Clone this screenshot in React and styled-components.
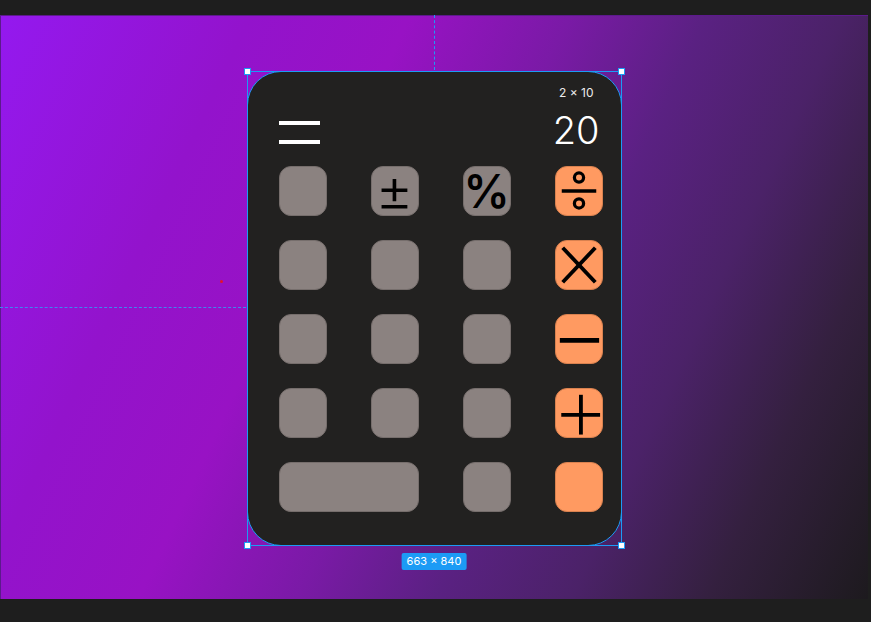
import React from 'react'
import styled, { createGlobalStyle } from 'styled-components'

const GlobalStyle = createGlobalStyle`
  html, body {
    margin: 0;
    padding: 0;
    background: #1e1e1e;
  }
  * {
    box-sizing: border-box;
  }
`;

const accent = '#1c9bf5';

const Screen = styled.div`
  width: 871px;
  height: 622px;
  padding-top: 15px;
  background: #1e1e1e;
  font-family: Inter, "Noto Sans", sans-serif;
  overflow: hidden;
`;

const Workspace = styled.div`
  display: flex;
  height: 584px;
`;

const Canvas = styled.div`
  position: relative;
  width: 868px;
  height: 584px;
  display: flex;
  justify-content: center;
  align-items: flex-start;
  padding-top: 56px;
  box-shadow: inset 1px 1px 0 #5c1a8c;
  background: linear-gradient(
    115deg,
    #9419ef 0%,
    #9313cc 22%,
    #9812c4 36%,
    #7a1aa6 50%,
    #5a2182 62%,
    #4b2268 74%,
    #34203f 86%,
    #1d1a1e 100%
  );
`;

const GuideV = styled.div`
  position: absolute;
  left: 434px;
  top: 0;
  height: 55px;
  border-left: 1px dashed ${accent};
`;

const GuideH = styled.div`
  position: absolute;
  left: 0;
  top: 292px;
  width: 246px;
  border-top: 1px dashed #3f86f0;
`;

const Marker = styled.div`
  position: absolute;
  left: 220px;
  top: 265px;
  width: 3px;
  height: 3px;
  border-radius: 50%;
  background: #e3122c;
`;

const Selection = styled.div`
  position: relative;
  width: 375px;
  height: 475px;

  &::after {
    content: '';
    position: absolute;
    inset: 0;
    border: 1px solid ${accent};
    pointer-events: none;
  }
`;

const Handle = styled.span`
  position: absolute;
  width: 7px;
  height: 7px;
  background: #fff;
  border: 1px solid ${accent};
  z-index: 2;
  ${({ $v }) => ($v === 'top' ? 'top: -3px;' : 'bottom: -3px;')}
  ${({ $h }) => ($h === 'left' ? 'left: -3px;' : 'right: -3px;')}
`;

const SizeBadge = styled.div`
  position: absolute;
  top: calc(100% + 7px);
  left: 50%;
  transform: translateX(-50%);
  padding: 0 5px;
  height: 17px;
  line-height: 17px;
  border-radius: 2px;
  background: ${accent};
  color: #fff;
  font-size: 11px;
  white-space: nowrap;
`;

const Card = styled.div`
  width: 100%;
  height: 100%;
  display: flex;
  flex-direction: column;
  padding: 14px 17px 0 31px;
  border: 1px solid ${accent};
  border-radius: 34px;
  background: #222120;
`;

const Expression = styled.div`
  align-self: flex-end;
  margin-right: 10px;
  font-size: 12px;
  line-height: 14px;
  color: #ececec;
`;

const DisplayRow = styled.div`
  display: flex;
  justify-content: space-between;
  align-items: flex-start;
  height: 38px;
  margin-top: 11px;
`;

const Hamburger = styled.div`
  display: flex;
  flex-direction: column;
  gap: 15px;
  margin-top: 10px;
  width: 41px;

  span {
    display: block;
    height: 4px;
    background: #fff;
  }
`;

const Result = styled.div`
  margin-right: 4px;
  font-size: 38px;
  font-weight: 300;
  line-height: 38px;
  color: #fff;
`;

const Keypad = styled.div`
  display: grid;
  grid-template-columns: repeat(4, 48px);
  grid-auto-rows: 50px;
  column-gap: 44px;
  row-gap: 24px;
  margin-top: 17px;
`;

const Key = styled.div`
  display: flex;
  align-items: center;
  justify-content: center;
  grid-column: ${({ $span }) => ($span ? `span ${$span}` : 'auto')};
  border-radius: 12px;
  border: 1px solid ${({ $op }) => ($op ? '#d9814f' : '#766e6c')};
  background: ${({ $op }) => ($op ? '#ff9a61' : '#8b8280')};
  color: #000;
`;

const Glyph = styled.span`
  font-size: ${({ $size }) => $size}px;
  font-weight: ${({ $weight }) => $weight || 400};
  line-height: 48px;
  margin-top: ${({ $lift }) => ($lift ? `-${$lift}px` : '0')};
`;

const OpIcon = ({ children }) => (
  <svg width="48" height="50" viewBox="0 0 48 50" fill="none" stroke="#000">
    {children}
  </svg>
);

const DivideIcon = () => (
  <OpIcon>
    <circle cx="24" cy="11" r="4.8" strokeWidth="3.4" />
    <line x1="6" y1="25" x2="42" y2="25" strokeWidth="3.6" />
    <circle cx="24" cy="38" r="4.8" strokeWidth="3.4" />
  </OpIcon>
);

const TimesIcon = () => (
  <OpIcon>
    <line x1="7" y1="7" x2="41" y2="43" strokeWidth="4" />
    <line x1="41" y1="7" x2="7" y2="43" strokeWidth="4" />
  </OpIcon>
);

const MinusIcon = () => (
  <OpIcon>
    <line x1="4" y1="26.5" x2="45" y2="26.5" strokeWidth="5" />
  </OpIcon>
);

const PlusIcon = () => (
  <OpIcon>
    <line x1="5.5" y1="27" x2="46" y2="27" strokeWidth="4" />
    <line x1="26" y1="6" x2="26" y2="47.5" strokeWidth="4" />
  </OpIcon>
);

const App = () => {
  return (
    <>
      <GlobalStyle />
      <Screen>
        <Workspace>
          <Canvas>
            <GuideV />
            <GuideH />
            <Marker />
            <Selection>
              <Card>
                <Expression>2 × 10</Expression>
                <DisplayRow>
                  <Hamburger>
                    <span />
                    <span />
                  </Hamburger>
                  <Result>20</Result>
                </DisplayRow>
                <Keypad>
                  <Key />
                  <Key><Glyph $size={58} $weight={300} $lift={2}>±</Glyph></Key>
                  <Key><Glyph $size={46} $weight={600}>%</Glyph></Key>
                  <Key $op><DivideIcon /></Key>

                  <Key />
                  <Key />
                  <Key />
                  <Key $op><TimesIcon /></Key>

                  <Key />
                  <Key />
                  <Key />
                  <Key $op><MinusIcon /></Key>

                  <Key />
                  <Key />
                  <Key />
                  <Key $op><PlusIcon /></Key>

                  <Key $span={2} />
                  <Key />
                  <Key $op />
                </Keypad>
              </Card>
              <Handle $v="top" $h="left" />
              <Handle $v="top" $h="right" />
              <Handle $v="bottom" $h="left" />
              <Handle $v="bottom" $h="right" />
              <SizeBadge>663 × 840</SizeBadge>
            </Selection>
          </Canvas>
        </Workspace>
      </Screen>
    </>
  );
};

export default App;
